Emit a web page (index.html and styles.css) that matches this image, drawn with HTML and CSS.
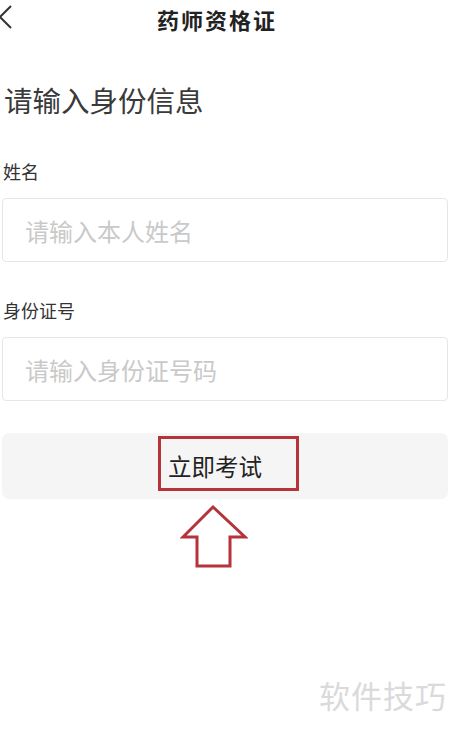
FILE: index.html
```html
<!DOCTYPE html>
<html lang="zh-CN">
<head>
    <meta charset="UTF-8" />
    <meta content="width=device-width, initial-scale=1.0" name="viewport" />
    <title>药师资格证</title>
    <link rel="stylesheet" href="styles.css">
</head>
<body>

<header class="header">
    <span class="back">
        <svg width="14" height="26" viewBox="0 0 14 26"><polyline points="12,2 1,13 12,24" fill="none" stroke="#333" stroke-width="2"/></svg>
    </span>
    <h1>药师资格证</h1>
</header>

<main class="main-content">
    <h2 class="page-title">请输入身份信息</h2>

    <!-- Name -->
    <label class="field-label" for="nameInput">姓名</label>
    <input class="field-input" id="nameInput" type="text" placeholder="请输入本人姓名">

    <!-- ID number -->
    <label class="field-label second" for="idInput">身份证号</label>
    <input class="field-input" id="idInput" type="text" placeholder="请输入身份证号码">

    <div class="btn-wrap">
        <button class="btn">立即考试</button>
        <span class="mark-box"></span>
        <svg class="mark-arrow" width="68" height="66" viewBox="0 0 68 66">
            <polygon points="33,3 65,33 50,33 50,62 17,62 17,33 3,33" fill="none" stroke="#b5333a" stroke-width="3" stroke-linejoin="miter"/>
        </svg>
    </div>
</main>

<div class="watermark">软件技巧</div>

</body>
</html>
```

FILE: styles.css
```css
* {
    box-sizing: border-box;
    margin: 0;
    padding: 0;
    font-family: "Noto Sans CJK SC", "Noto Sans", sans-serif;
}

body {
    background: #ffffff;
    color: #333;
    width: 450px;
    height: 729px;
    position: relative;
    overflow: hidden;
}

.header {
    height: 38px;
    display: flex;
    align-items: center;
    justify-content: center;
    position: relative;
}

.header h1 {
    font-size: 22px;
    font-weight: bold;
    color: #222;
    letter-spacing: 2px;
    line-height: 1;
    margin-right: 16px;
}

.back {
    position: absolute;
    left: -1px;
    top: 4px;
}

.main-content {
    padding: 0 2px;
}

.page-title {
    font-size: 28.5px;
    font-weight: normal;
    line-height: 28px;
    color: #3a3a3a;
    margin-top: 48px;
    padding-left: 2px;
}

.field-label {
    display: block;
    font-size: 18px;
    line-height: 18px;
    color: #333;
    margin-top: 48px;
    padding-left: 1px;
}

.field-label.second {
    margin-top: 39px;
}

.field-input {
    display: block;
    width: 100%;
    height: 64px;
    margin-top: 18px;
    border: 1px solid #e6e6e6;
    border-radius: 4px;
    padding: 0 22px;
    font-size: 24px;
    color: #333;
    outline: none;
    background: #fff;
}

.field-input::placeholder {
    color: #c9c9c9;
}

.btn-wrap {
    position: relative;
    margin-top: 32px;
}

.btn {
    display: block;
    width: 100%;
    height: 66px;
    border: none;
    border-radius: 7px;
    background-color: #f5f5f5;
    font-size: 23.5px;
    color: #222;
    padding-right: 20px;
    cursor: pointer;
}

/* red annotation overlays */
.mark-box {
    position: absolute;
    left: 156px;
    top: 3px;
    width: 141px;
    height: 55px;
    border: 3px solid #b5333a;
}

.mark-arrow {
    position: absolute;
    left: 178px;
    top: 71px;
}

.watermark {
    position: absolute;
    right: 3px;
    top: 672px;
    font-size: 31px;
    color: #dadada;
    letter-spacing: 1px;
}
```
